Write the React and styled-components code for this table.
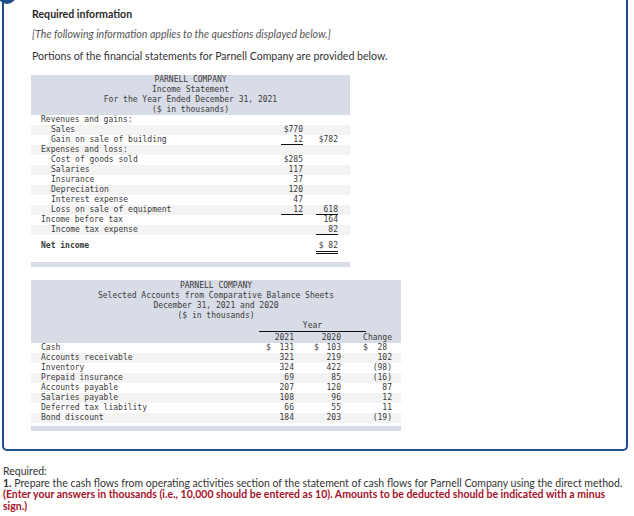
import styled, { createGlobalStyle } from 'styled-components';

const GlobalStyle = createGlobalStyle`
  body {
    margin: 0;
    background: #fff;
    font-family: Lato, "Open Sans", Arial, sans-serif;
    color: #333;
  }
`;

const Page = styled.div`
  width: 634px;
  height: 516px;
  overflow: hidden;
  position: relative;
`;

const Badge = styled.div`
  position: absolute;
  left: -2px;
  top: -14px;
  width: 18px;
  height: 18px;
  border-radius: 50%;
  background: #1d4f8c;
`;

const Box = styled.div`
  margin-left: 2px;
  width: 626px;
  height: 451px;
  border: 2px solid #1d4f8c;
  border-top: none;
  border-radius: 0 0 5px 5px;
  padding: 7px 0 0 28px;
  box-sizing: border-box;
`;

const Title = styled.div`
  font-size: 10.6px;
  font-weight: 700;
  line-height: 14px;
  color: #2b2b2b;
`;

const Note = styled.div`
  font-size: 10.6px;
  font-style: italic;
  line-height: 14px;
  color: #555;
  margin-top: 6px;
`;

const Intro = styled.div`
  font-size: 10.6px;
  line-height: 14px;
  color: #333;
  margin-top: 8px;
`;

const Table = styled.div`
  width: ${(p) => p.$width}px;
  margin-top: ${(p) => p.$top}px;
  margin-left: -1px;
  font-family: "DejaVu Sans Mono", "Liberation Mono", monospace;
  font-size: 8px;
  color: #3a3a3a;
`;

const Head = styled.div`
  background: #d8dce6;
  text-align: center;
  line-height: 10px;
  padding-top: ${(p) => p.$pad || 0}px;
  white-space: pre;
`;

const Row = styled.div`
  display: grid;
  grid-template-columns: ${(p) => p.$cols};
  column-gap: ${(p) => p.$gap || 0}px;
  padding-right: ${(p) => p.$right || 0}px;
  height: ${(p) => p.$h || 10}px;
  line-height: 10px;
  background: ${(p) => (p.$shade ? '#f3f3f3' : '#fff')};
  align-items: start;
  padding-top: ${(p) => p.$padTop || 0}px;
  box-sizing: border-box;
`;

const Label = styled.div`
  padding-left: ${(p) => (p.$indent ? 20 : 10)}px;
  font-weight: ${(p) => (p.$bold ? 700 : 400)};
  white-space: pre;
`;

const Amount = styled.div`
  text-align: right;
  white-space: pre;
  height: 10px;
  box-shadow: ${(p) => (p.$line ? 'inset 0 -1px 0 #111' : 'none')};
  border-bottom: ${(p) => (p.$double ? '3px double #111' : 'none')};
`;

const Bar = styled.div`
  height: 5px;
  margin-top: 3px;
  background: #d8dce6;
`;

const HeadGrid = styled.div`
  display: grid;
  grid-template-columns: 1fr 54px 47px 41px;
  background: #d8dce6;
  line-height: 10px;
`;

const YearCell = styled.div`
  grid-column: 2 / span 2;
  margin-right: -6px;
  text-align: center;
  border-bottom: 1px solid #111;
  height: 11px;
  line-height: 9px;
  box-sizing: border-box;
`;

const ColHead = styled.div`
  text-align: right;
  padding-top: 1px;
  padding-right: ${(p) => p.$pr}px;
`;

const Money = styled.div`
  display: flex;
  justify-content: space-between;
  padding-left: ${(p) => p.$pl}px;
  padding-right: ${(p) => p.$pr}px;
  white-space: pre;
`;

const Footer = styled.div`
  width: 625px;
  padding: 15px 0 0 3px;
  font-size: 10.5px;
  line-height: 11.5px;
  color: #333;
`;

const Strong = styled.span`
  font-weight: 700;
`;

const Warn = styled.div`
  color: #a5122a;
  font-weight: 700;
`;

const income = [
  { label: 'Revenues and gains:' },
  { label: 'Sales', indent: true, a: '$770' },
  { label: 'Gain on sale of building', indent: true, a: '12', aLine: true, b: '$782' },
  { label: 'Expenses and loss:' },
  { label: 'Cost of goods sold', indent: true, a: '$285' },
  { label: 'Salaries', indent: true, a: '117' },
  { label: 'Insurance', indent: true, a: '37' },
  { label: 'Depreciation', indent: true, a: '120' },
  { label: 'Interest expense', indent: true, a: '47' },
  { label: 'Loss on sale of equipment', indent: true, a: '12', aLine: true, b: '618', bLine: true },
  { label: 'Income before tax', b: '164' },
  { label: 'Income tax expense', indent: true, b: '82', bLine: true },
];

const accounts = [
  ['Cash', '131', '103', '28 ', true],
  ['Accounts receivable', '321', '219', '102'],
  ['Inventory', '324', '422', '(98)'],
  ['Prepaid insurance', '69', '85', '(16)'],
  ['Accounts payable', '207', '120', '87'],
  ['Salaries payable', '108', '96', '12'],
  ['Deferred tax liability', '66', '55', '11'],
  ['Bond discount', '184', '203', '(19)'],
];

const ISCOLS = '1fr 22px 22px';
const BSCOLS = '1fr 54px 47px 41px';

export default function App() {
  return (
    <Page>
      <GlobalStyle />
      <Badge />
      <Box>
        <Title>Required information</Title>
        <Note>[The following information applies to the questions displayed below.]</Note>
        <Intro>Portions of the financial statements for Parnell Company are provided below.</Intro>

        <Table $width={319} $top={12}>
          <Head>
            <div>PARNELL COMPANY</div>
            <div>Income Statement</div>
            <div>For the Year Ended December 31, 2021</div>
            <div>($ in thousands)</div>
          </Head>
          {income.map((r, i) => (
            <Row key={r.label} $cols={ISCOLS} $gap={13} $right={12} $shade={i % 2 === 1}>
              <Label $indent={r.indent}>{r.label}</Label>
              <Amount $line={r.aLine}>{r.a || ''}</Amount>
              <Amount $line={r.bLine}>{r.b || ''}</Amount>
            </Row>
          ))}
          <Row $cols={ISCOLS} $gap={13} $right={12} $h={24} $padTop={6}>
            <Label $bold>Net income</Label>
            <Amount />
            <Amount $double>$ 82</Amount>
          </Row>
          <Bar />
        </Table>

        <Table $width={370} $top={13}>
          <Head $pad={1}>
            <div>PARNELL COMPANY</div>
            <div>Selected Accounts from Comparative Balance Sheets</div>
            <div>December 31, 2021 and 2020</div>
            <div>($ in thousands)</div>
          </Head>
          <HeadGrid>
            <YearCell>Year</YearCell>
            <div />
            <div />
            <ColHead $pr={19}>2021</ColHead>
            <ColHead $pr={19}>2020</ColHead>
            <ColHead $pr={9}>Change</ColHead>
          </HeadGrid>
          {accounts.map(([name, y1, y0, ch, dollar], i) => (
            <Row key={name} $cols={BSCOLS} $shade={i % 2 === 1}>
              <Label>{name}</Label>
              <Money $pl={7} $pr={19}>
                <span>{dollar ? '$' : ''}</span>
                <span>{y1}</span>
              </Money>
              <Money $pl={1} $pr={19}>
                <span>{dollar ? '$' : ''}</span>
                <span>{y0}</span>
              </Money>
              <Money $pl={3} $pr={9}>
                <span>{dollar ? '$' : ''}</span>
                <span>{ch}</span>
              </Money>
            </Row>
          ))}
          <Bar />
        </Table>
      </Box>

      <Footer>
        <div>Required:</div>
        <div>
          <Strong>1.</Strong> Prepare the cash flows from operating activities section of the statement of cash flows for Parnell Company using the direct method.
        </div>
        <Warn>
          (Enter your answers in thousands (i.e., 10,000 should be entered as 10). Amounts to be deducted should be indicated with a minus sign.)
        </Warn>
      </Footer>
    </Page>
  );
}
